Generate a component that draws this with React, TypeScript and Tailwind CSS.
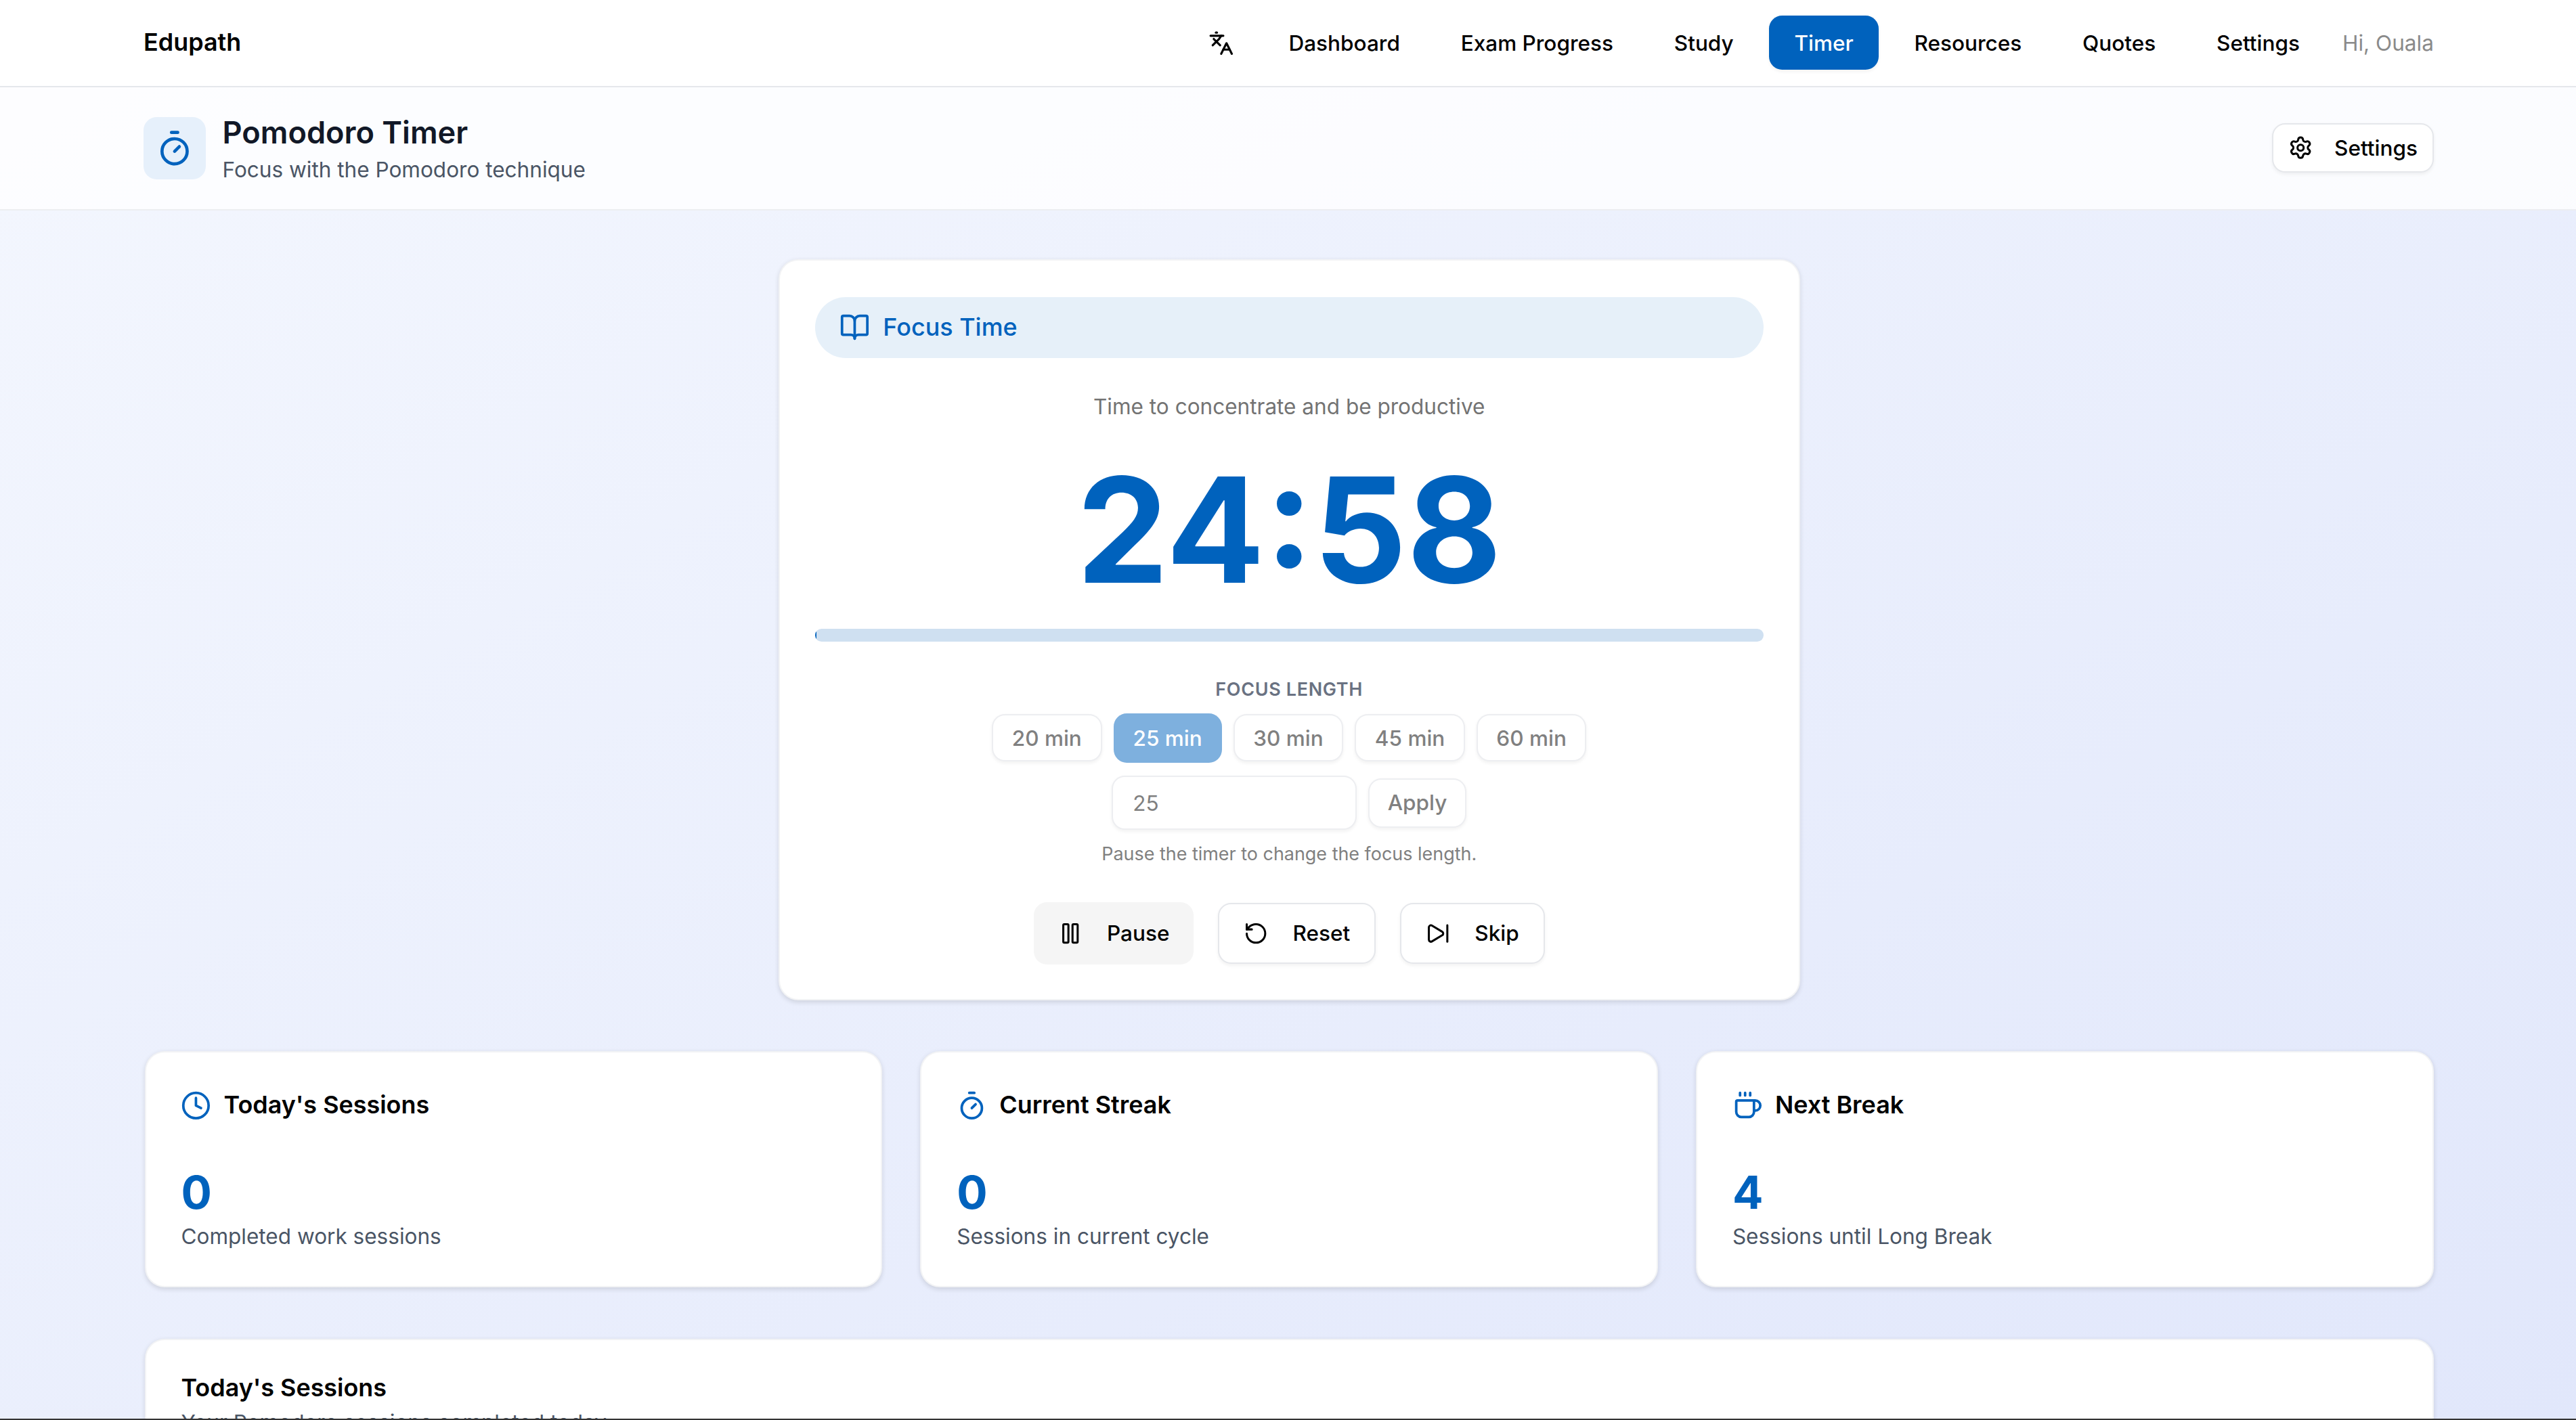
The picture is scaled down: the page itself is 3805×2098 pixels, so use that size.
import {
  BookOpen,
  Clock,
  Coffee,
  Languages,
  Pause,
  RotateCcw,
  Settings,
  SkipForward,
  Timer,
} from "lucide-react";
import type { ReactNode } from "react";

const navItems = ["Dashboard", "Exam Progress", "Study", "Timer", "Resources", "Quotes", "Settings"];
const presets = [20, 25, 30, 45, 60];

function StatCard({
  icon,
  title,
  value,
  label,
}: {
  icon: ReactNode;
  title: string;
  value: string;
  label: string;
}) {
  return (
    <div className="rounded-xl border border-gray-200/50 bg-white py-[22px] px-[21.4px] shadow-[0_1px_3px_rgba(0,0,0,0.12)] h-[143.5px]">
      <div className="flex items-center gap-[7.5px] h-[20px]">
        {icon}
        <h3 className="text-[14.8px] font-semibold text-black">{title}</h3>
      </div>
      <div className="mt-[25px] text-[27.75px] leading-9 font-bold text-[#0062bd]">{value}</div>
      <p className="text-[13px] leading-5 text-gray-600 mt-[-1px]">{label}</p>
    </div>
  );
}

function ControlButton({
  icon,
  children,
  muted,
}: {
  icon: ReactNode;
  children: ReactNode;
  muted?: boolean;
}) {
  return (
    <button
      className={
        muted
          ? "flex items-center gap-[14.8px] h-[38px] px-[14.8px] rounded-lg bg-[#f5f5f5] text-[13px] font-medium text-black"
          : "flex items-center gap-[14.8px] h-[37px] px-[14.8px] rounded-lg border border-gray-200 bg-white text-[13px] font-medium text-black shadow-xs"
      }
    >
      {icon}
      {children}
    </button>
  );
}

export default function App() {
  return (
    <div className="[zoom:2.4267] w-full h-[864.55px] flex flex-col overflow-hidden [font-family:Inter,sans-serif] bg-gradient-to-br from-[#f4f7fe] to-[#e1e7fb]">
      <nav className="shrink-0 h-[53px] bg-white border-b border-gray-200 pl-[87.4px] pr-[86.6px] flex items-center justify-between">
        <span className="text-[14.8px] font-semibold text-black">Edupath</span>
        <div className="flex items-center">
          <Languages className="w-[15.5px] h-[15.5px] text-black mr-[18px]" />
          <div className="flex items-center gap-[6px]">
            {navItems.map((item) => (
              <a
                key={item}
                className={
                  item === "Timer"
                    ? "h-[33px] px-[15.5px] flex items-center rounded-lg bg-[#0062bd] text-[13px] font-medium text-white shadow-xs"
                    : "h-[33px] px-[15.5px] flex items-center rounded-lg text-[13px] font-medium text-black"
                }
              >
                {item}
              </a>
            ))}
          </div>
          <span className="ml-[10.5px] text-[13px] text-[#8a8a8a]">Hi, Ouala</span>
        </div>
      </nav>

      <header className="shrink-0 h-[75px] bg-white/80 border-b border-gray-200/70 pl-[87.4px] pr-[86.6px] flex items-center justify-between">
        <div className="flex items-center gap-[10px]">
          <div className="w-[38px] h-[38px] rounded-lg bg-[#e6f0fb] flex items-center justify-center">
            <Timer className="w-[23px] h-[23px] text-[#0062bd]" />
          </div>
          <div className="pt-[2px]">
            <h1 className="text-[18.6px] leading-[25px] font-semibold text-[#111827]">Pomodoro Timer</h1>
            <p className="text-[13px] leading-5 text-gray-600">Focus with the Pomodoro technique</p>
          </div>
        </div>
        <button className="flex items-center gap-[13px] h-[30px] px-[9px] rounded-lg border border-gray-200 bg-white text-[13px] font-medium text-black shadow-xs">
          <Settings className="w-[15px] h-[15px]" />
          Settings
        </button>
      </header>

      <main className="flex-1 min-h-0 pl-[88px] pr-[86.6px] pt-[30px] flex flex-col items-center">
        <section className="shrink-0 w-[622px] rounded-xl border border-gray-200/50 bg-white pt-[22px] px-[21.5px] pb-[21px] shadow-[0_1px_3px_rgba(0,0,0,0.12)] flex flex-col items-center">
          <div className="w-full h-[37px] rounded-full bg-[#e6f0f9] px-[15px] flex items-center gap-[8px] text-[#0062bd]">
            <BookOpen className="w-[18.5px] h-[18.5px]" />
            <span className="text-[14.8px] font-medium">Focus Time</span>
          </div>
          <p className="mt-[20px] text-[13px] leading-5 text-[#737373]">Time to concentrate and be productive</p>
          <div className="mt-[17px] text-[88.8px] leading-[96px] font-bold text-[#0062bd]">24:58</div>
          <div className="mt-[12px] w-full h-2 rounded-full bg-[#cfe0f1] overflow-hidden">
            <div className="h-full w-[0.2%] bg-[#0062bd]" />
          </div>
          <p className="mt-[21px] text-[11.1px] leading-4 font-semibold tracking-wide text-gray-500">FOCUS LENGTH</p>
          <div className="mt-[6.5px] flex items-center gap-[7px]">
            {presets.map((m) => (
              <button
                key={m}
                className={
                  m === 25
                    ? "h-[30px] w-[66px] rounded-lg bg-[#7eb0de] text-[13px] font-medium text-white"
                    : "h-[29px] w-[67px] rounded-lg border border-gray-200/70 bg-white text-[13px] font-medium text-[#808080] shadow-xs"
                }
              >
                {m} min
              </button>
            ))}
          </div>
          <div className="mt-[8px] flex items-center gap-[7px]">
            <input
              readOnly
              value="25"
              className="w-[149px] h-[33px] px-3 rounded-lg border border-gray-200/70 bg-white text-[13px] text-[#808080] shadow-xs outline-none"
            />
            <button className="h-[30px] w-[60px] rounded-lg border border-gray-200/70 bg-white text-[13px] font-medium text-[#808080] shadow-xs">
              Apply
            </button>
          </div>
          <p className="mt-[6.5px] text-[11.1px] leading-4 text-[#808080]">Pause the timer to change the focus length.</p>
          <div className="mt-[21.5px] flex items-center gap-[14.8px]">
            <ControlButton muted icon={<Pause className="w-[15px] h-[15px]" />}>Pause</ControlButton>
            <ControlButton icon={<RotateCcw className="w-[15px] h-[15px]" />}>Reset</ControlButton>
            <ControlButton icon={<SkipForward className="w-[15px] h-[15px]" />}>Skip</ControlButton>
          </div>
        </section>

        <div className="shrink-0 mt-[31px] w-full grid grid-cols-3 gap-[23px]">
          <StatCard
            icon={<Clock className="w-[18.5px] h-[18.5px] text-[#0062bd]" />}
            title="Today's Sessions"
            value="0"
            label="Completed work sessions"
          />
          <StatCard
            icon={<Timer className="w-[18.5px] h-[18.5px] text-[#0062bd]" />}
            title="Current Streak"
            value="0"
            label="Sessions in current cycle"
          />
          <StatCard
            icon={<Coffee className="w-[18.5px] h-[18.5px] text-[#0062bd]" />}
            title="Next Break"
            value="4"
            label="Sessions until Long Break"
          />
        </div>

        <section className="shrink-0 mt-[31.5px] w-full rounded-xl border border-gray-200/50 bg-white px-[21.4px] pt-[21px] shadow-[0_1px_3px_rgba(0,0,0,0.12)]">
          <h2 className="text-[14.8px] leading-[16px] font-semibold text-black">Today's Sessions</h2>
          <p className="mt-[3.5px] text-[13px] text-gray-600">Your Pomodoro sessions completed today</p>
        </section>
      </main>

      <div className="shrink-0 h-[0.8px] bg-[#333333]" />
    </div>
  );
}
